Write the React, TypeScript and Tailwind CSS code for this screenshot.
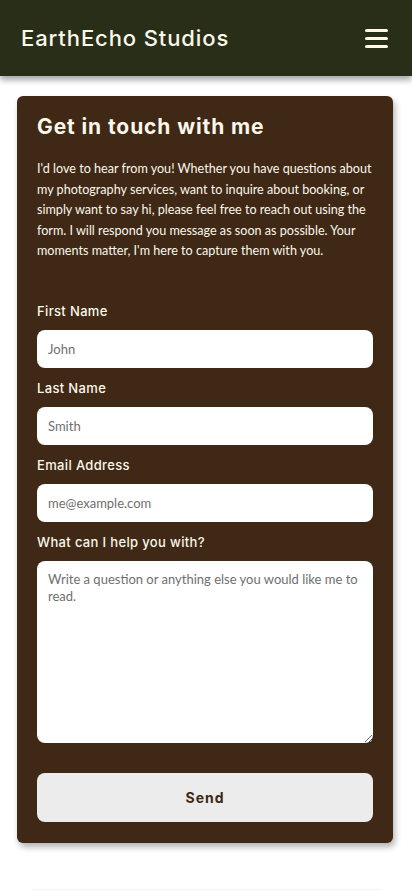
import type { ReactNode } from "react";

const heading = "font-['Inter','Liberation_Sans',sans-serif]";
const body = "font-['Lato','Liberation_Sans',sans-serif]";

function Field({ label, children }: { label: string; children: ReactNode }) {
  return (
    <label className="flex flex-col">
      <span className={`${heading} text-[13px] leading-5 font-medium text-[#fbf7ea] tracking-[0.35px] mb-[9px]`}>
        {label}
      </span>
      {children}
    </label>
  );
}

export default function App() {
  return (
    <div className="min-h-[891px] bg-white">
      <header className="h-[76px] bg-[#282e18] flex items-center justify-between pl-[21px] pr-[24px] shadow-[0_4px_6px_rgba(0,0,0,0.35)] relative z-10">
        <span className={`${heading} text-[22px] font-medium text-[#fbf7ea] tracking-[0.9px]`}>
          EarthEcho Studios
        </span>
        <button className="flex flex-col gap-[5px] w-[23px]" aria-label="Menu">
          <span className="h-[3px] w-full rounded-sm bg-[#fffbe8]" />
          <span className="h-[3px] w-full rounded-sm bg-[#fffbe8]" />
          <span className="h-[3px] w-full rounded-sm bg-[#fffbe8]" />
        </button>
      </header>

      <main className="pl-[17px] pr-[19px] pt-[20px]">
        <section className="bg-[#3f2816] rounded-[6px] px-5 pt-[16px] pb-[21px] shadow-[2px_4px_6px_rgba(0,0,0,0.3)]">
          <h1 className={`${heading} text-[21px] leading-[30px] font-bold text-[#fbf7ea] tracking-[0.9px]`}>
            Get in touch with me
          </h1>
          <p className={`${body} mt-[17px] text-[12.6px] leading-[20.5px] text-[#fbf7ea]`}>
            I'd love to hear from you! Whether you have questions about my photography services, want to inquire about booking, or simply want to say hi, please feel free to reach out using the form. I will respond you message as soon as possible. Your moments matter, I'm here to capture them with you.
          </p>

          <form className="mt-[39px] flex flex-col gap-[10px]" onSubmit={(e) => e.preventDefault()}>
            <Field label="First Name">
              <input
                placeholder="John"
                className={`${body} h-[38px] rounded-[8px] bg-white px-[11px] text-[13px] text-gray-800 placeholder:text-[#6f6f6f] outline-none`}
              />
            </Field>
            <Field label="Last Name">
              <input
                placeholder="Smith"
                className={`${body} h-[38px] rounded-[8px] bg-white px-[11px] text-[13px] text-gray-800 placeholder:text-[#6f6f6f] outline-none`}
              />
            </Field>
            <Field label="Email Address">
              <input
                placeholder="me@example.com"
                className={`${body} h-[38px] rounded-[8px] bg-white px-[11px] text-[13px] text-gray-800 placeholder:text-[#6f6f6f] outline-none`}
              />
            </Field>
            <Field label="What can I help you with?">
              <textarea
                placeholder="Write a question or anything else you would like me to read."
                className={`${body} h-[182px] rounded-[8px] bg-white px-[11px] py-[10px] text-[13px] leading-[17px] text-gray-800 placeholder:text-[#6f6f6f] outline-none resize-y`}
              />
            </Field>
            <button
              type="submit"
              className={`${heading} mt-[20px] h-[49px] rounded-[8px] bg-[#ececec] text-[14px] font-bold tracking-[1px] text-[#3f2816]`}
            >
              Send
            </button>
          </form>
        </section>
      </main>

      <footer className="mt-[46px] mx-[32px] border-t border-[#f2f2f2]" />
    </div>
  );
}
